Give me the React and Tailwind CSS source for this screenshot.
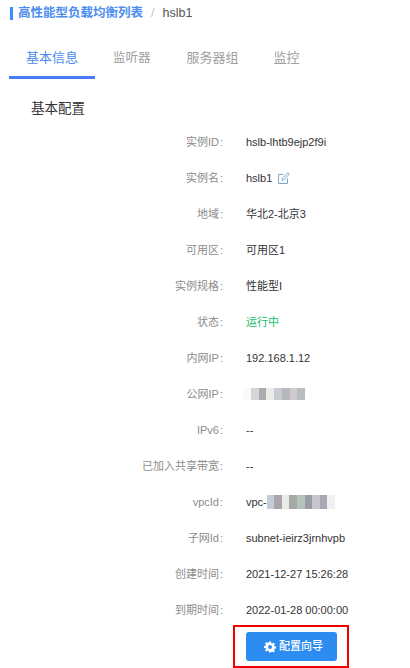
import React from "react";

const font = { fontFamily: '"Liberation Sans", "Noto Sans CJK SC", sans-serif' };

const ip = ["#fbfaf8", "#d5d6d9", "#a9abae", "#ecece7", "#c9cbd2", "#b5b9bd", "#d0ccce", "#b9bdc1"];
const vpc = ["#c6ccd6", "#a9a5ab", "#e8ece8", "#a5aaa5", "#b6c2bd", "#9a9ca6", "#c8c8cc", "#a8a8b4", "#f0f0f0"];

function Mosaic({ colors, width, height }) {
  return (
    <span className="inline-flex items-stretch" style={{ width, height }}>
      {colors.map((c, i) => (
        <span key={i} className="flex-1" style={{ backgroundColor: c }} />
      ))}
    </span>
  );
}

function Row({ label, children }) {
  return (
    <div className="flex h-9 items-center text-[11px]">
      <div className="w-[223px] shrink-0 text-right text-[#8c8c8c]">{label}<span className="ml-px">:</span></div>
      <div className="ml-[23px] flex items-center text-[#333]">{children}</div>
    </div>
  );
}

export default function App() {
  return (
    <div className="h-[668px] w-[410px] overflow-hidden bg-white" style={font}>
      <div className="flex h-[26px] items-center pl-2.5 text-[12.5px]">
        <span className="h-[13px] w-[3px] bg-[#3b8cff]" />
        <span className="ml-[5px] font-bold text-[#4b8df0]">高性能型负载均衡列表</span>
        <span className="ml-[8px] mr-[8px] text-[#c0c4cc]">/</span>
        <span className="text-[#555]">hslb1</span>
      </div>

      <div className="mt-[8px] flex h-[45px] pl-[9px] text-[13px] text-[#a0a0a0]">
        <div className="flex w-[86px] items-center justify-center border-b-[3px] border-[#4a7cf8] pt-[6px] text-[#4a8af0]">基本信息</div>
        <div className="ml-[18px] flex items-center border-b-[3px] border-transparent pt-[6px] text-[12.5px]">监听器</div>
        <div className="ml-[36px] flex items-center border-b-[3px] border-transparent pt-[6px]">服务器组</div>
        <div className="ml-[35px] flex items-center border-b-[3px] border-transparent pt-[6px]">监控</div>
      </div>

      <div className="mt-[20px] pl-[31px] text-[13.5px] leading-5 text-[#333]">基本配置</div>

      <div className="mt-[5px]">
        <Row label="实例ID">hslb-lhtb9ejp2f9i</Row>
        <Row label="实例名">
          hslb1
          <svg className="ml-[6px]" width="12" height="12" viewBox="0 0 12 12" fill="none" stroke="#7fa6c8" strokeWidth="1">
            <path d="M9.5 6.5v5h-9v-9h5" />
            <path d="M4 8.2l.4-2L10 .7l1.4 1.4-5.5 5.6z" />
          </svg>
        </Row>
        <Row label="地域">华北2-北京3</Row>
        <Row label="可用区">可用区1</Row>
        <Row label="实例规格">性能型I</Row>
        <Row label="状态"><span className="text-[#19be6b]">运行中</span></Row>
        <Row label="内网IP">192.168.1.12</Row>
        <Row label="公网IP"><span className="-ml-[3px] flex"><Mosaic colors={ip} width={62} height={12} /></span></Row>
        <Row label="IPv6">--</Row>
        <Row label="已加入共享带宽">--</Row>
        <Row label="vpcId">
          vpc-
          <Mosaic colors={vpc} width={68} height={14} />
        </Row>
        <Row label="子网Id">subnet-ieirz3jrnhvpb</Row>
        <Row label="创建时间">2021-12-27 15:26:28</Row>
        <Row label="到期时间">2022-01-28 00:00:00</Row>
      </div>

      <div className="ml-[233px] mt-[-3px] flex h-[43px] w-[116px] items-center justify-center border-2 border-[#f00000]">
        <button className="flex h-[29px] w-[91px] items-center justify-center gap-[3px] rounded-[3px] bg-[#2d8cf0] pl-[5px] text-[11px] font-medium text-white">
          <svg width="12" height="12" viewBox="0 0 24 24" fill="white">
            <path fillRule="evenodd" d="M10 1h4l.6 3.1 1.9.8 2.7-1.8 2.7 2.8-1.8 2.6.8 1.9 3.1.6v4l-3.1.6-.8 1.9 1.8 2.7-2.8 2.7-2.6-1.8-1.9.8L14 23h-4l-.6-3.1-1.9-.8-2.7 1.8-2.7-2.8 1.8-2.6-.8-1.9L0 14v-4l3.1-.6.8-1.9-1.8-2.7 2.8-2.7 2.6 1.8 1.9-.8zM12 8a4 4 0 100 8 4 4 0 000-8z" />
          </svg>
          配置向导
        </button>
      </div>
    </div>
  );
}
